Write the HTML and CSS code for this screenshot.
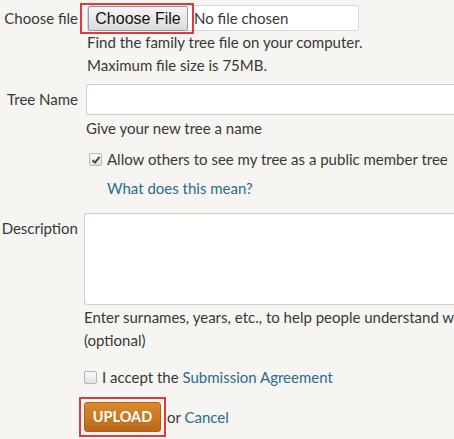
FILE: index.html
```html
<!DOCTYPE html>
<html>
<head>
<meta charset="utf-8">
<link rel="stylesheet" href="styles.css">
</head>
<body>
<form class="form">
  <div class="row row-file">
    <label class="label">Choose file</label>
    <div class="field">
      <div class="file-box">
        <span class="btn-wrap"><span class="file-btn">Choose File</span><span class="annot annot-file"></span></span>
        <span class="file-text">No file chosen</span>
      </div>
      <p class="hint hint-file">Find the family tree file on your computer.<br>Maximum file size is 75MB.</p>
    </div>
  </div>

  <div class="row row-name">
    <label class="label label-name">Tree Name</label>
    <div class="field">
      <div class="text-input"></div>
      <p class="hint">Give your new tree a name</p>
      <div class="check-line check-public">
        <span class="checkbox checked"><svg width="10" height="10" viewBox="0 0 10 10"><path d="M1.5 5.2 L4 7.6 L8.6 1.8" fill="none" stroke="#444" stroke-width="1.9"/></svg></span>
        <span>Allow others to see my tree as a public member tree</span>
      </div>
      <a class="link what-link">What does this mean?</a>
    </div>
  </div>

  <div class="row row-desc">
    <label class="label label-desc">Description</label>
    <div class="field field-desc">
      <div class="textarea"></div>
      <p class="hint hint-desc">Enter surnames, years, etc., to help people understand what's in your tree<br>(optional)</p>
      <div class="check-line check-accept">
        <span class="checkbox"></span>
        <span>I accept the <a class="link">Submission Agreement</a></span>
      </div>
      <div class="actions">
        <span class="btn-wrap upload-wrap"><span class="upload-btn">UPLOAD</span><span class="annot annot-upload"></span></span>
        <span class="or">or <a class="link">Cancel</a></span>
      </div>
    </div>
  </div>
</form>
</body>
</html>
```

FILE: styles.css
```css
html, body {
  margin: 0;
  padding: 0;
  background: #f6f5f1;
  overflow: hidden;
}
body {
  font-family: "Lato", "Open Sans", sans-serif;
  font-size: 15px;
  color: #383838;
  width: 454px;
  height: 439px;
}
.form {
  padding-top: 5px;
}
.row {
  display: grid;
  grid-template-columns: 78px 1fr;
  column-gap: 8px;
}
.label {
  text-align: right;
  line-height: 26px;
  white-space: nowrap;
}
.field {
  min-width: 0;
  white-space: nowrap;
}
.file-box {
  position: relative;
  display: flex;
  align-items: center;
  width: 270px;
  height: 24px;
  background: #fff;
  border: 1px solid #d6d6d6;
  border-radius: 3px;
  padding: 0;
  margin-left: 1px;
}
.btn-wrap {
  position: relative;
  display: inline-flex;
}
.file-btn {
  display: inline-block;
  box-sizing: border-box;
  height: 25px;
  width: 100px;
  font-family: "Liberation Sans", Arial, sans-serif;
  font-size: 16px;
  line-height: 23px;
  text-align: center;
  color: #111;
  background: linear-gradient(#f5f5f5, #dcdcdc);
  border: 1px solid #9a9a9a;
  border-radius: 2px;
}
.annot {
  position: absolute;
  border: 2px solid #e0393e;
  pointer-events: none;
}
.annot-file {
  inset: -3px -6px -3px -8px;
}
.file-text {
  margin-left: 6px;
  font-size: 15px;
}
.hint {
  margin: 0;
  line-height: 23px;
}
.hint-file {
  padding-left: 1px;
}
.row-name {
  margin-top: 7px;
}
.label-name {
  line-height: 30px;
}
.text-input {
  height: 29px;
  background: #fff;
  border: 1px solid #cfcfcf;
  border-right: none;
  border-radius: 3px 0 0 3px;
  margin-bottom: 2px;
}
.check-line {
  display: flex;
  align-items: center;
  line-height: 23px;
}
.check-public {
  margin-top: 8px;
  padding-left: 3px;
}
.checkbox {
  box-sizing: border-box;
  width: 13px;
  height: 13px;
  border: 1px solid #b5b5b5;
  border-radius: 2px;
  background: linear-gradient(#fcfcfc, #e2e2e2);
  margin-right: 5px;
  display: inline-flex;
  align-items: center;
  justify-content: center;
}
.checkbox svg {
  display: block;
}
.link {
  color: #2a6c8e;
  text-decoration: none;
}
.what-link {
  display: block;
  margin-top: 6px;
  padding-left: 21px;
  line-height: 23px;
}
.row-desc {
  margin-top: 13px;
}
.label-desc {
  line-height: 30px;
}
.field-desc {
  margin-left: -2px;
}
.textarea {
  height: 90px;
  background: #fff;
  border: 1px solid #cfcfcf;
  border-right: none;
  border-radius: 3px 0 0 3px;
  margin-bottom: 1px;
}
.hint-desc {
  overflow: hidden;
}
.check-accept {
  margin-top: 14px;
}
.actions {
  display: flex;
  align-items: center;
  margin-top: 13px;
}
.upload-btn {
  display: inline-block;
  box-sizing: border-box;
  width: 77px;
  height: 30px;
  line-height: 28px;
  text-align: center;
  color: #fff;
  font-weight: bold;
  font-size: 14.5px;
  background: linear-gradient(#d98b2c, #b9681a);
  border: 1px solid #ad6118;
  border-radius: 3px;
}
.annot-upload {
  inset: -5px;
}
.or {
  margin-left: 6px;
}
```
